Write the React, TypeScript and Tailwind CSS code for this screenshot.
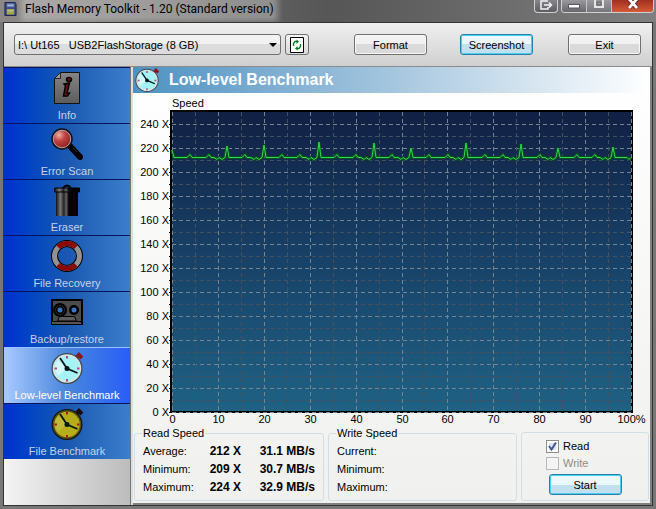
import type { ReactNode } from 'react';

const sidebarItems = [
  { name: 'Info', icon: <InfoIcon /> },
  { name: 'Error Scan', icon: <ScanIcon /> },
  { name: 'Eraser', icon: <TrashIcon /> },
  { name: 'File Recovery', icon: <LifebuoyIcon /> },
  { name: 'Backup/restore', icon: <TapeIcon /> },
  { name: 'Low-level Benchmark', icon: <StopwatchIcon face="#a5f3f4" />, active: true },
  { name: 'File Benchmark', icon: <StopwatchIcon face="#b5ae18" dark /> },
];

const readRows = [
  { label: 'Average:', factor: '212 X', rate: '31.1 MB/s' },
  { label: 'Minimum:', factor: '209 X', rate: '30.7 MB/s' },
  { label: 'Maximum:', factor: '224 X', rate: '32.9 MB/s' },
];

const writeRows = ['Current:', 'Minimum:', 'Maximum:'];

function InfoIcon() {
  return (
    <svg viewBox="0 0 32 32" className="size-8 shrink-0" aria-hidden="true">
      <defs>
        <linearGradient id="page" x1="0" y1="0" x2="0" y2="1">
          <stop offset="0" stopColor="#858585" />
          <stop offset="1" stopColor="#5c5c5c" />
        </linearGradient>
      </defs>
      <path d="M9.500 .5H28.500V31.500H3.500V6.500Z" fill="url(#page)" stroke="#111" />
      <path d="M9.500 .5V6.500H3.500Z" fill="#999" stroke="#222" />
      <ellipse cx="18" cy="7.500" rx="2.500" ry="2" fill="#701010" stroke="#000" strokeWidth="1.500" />
      <path d="M13 12L18.500 11L16 21L18.500 21L16.500 24H12.500L14.500 13.500Z" fill="#701010" stroke="#000" strokeWidth="1.500" />
    </svg>
  );
}

function ScanIcon() {
  return (
    <svg viewBox="0 0 32 32" className="size-8 shrink-0" aria-hidden="true">
      <defs>
        <radialGradient id="lens" cx=".35" cy=".3" r=".75">
          <stop offset="0" stopColor="#efb0a8" />
          <stop offset=".4" stopColor="#c04444" />
          <stop offset="1" stopColor="#861818" />
        </radialGradient>
      </defs>
      <path d="M18 17L29 29" stroke="#000" strokeWidth="6" strokeLinecap="round" />
      <circle cx="11" cy="11" r="10" fill="url(#lens)" stroke="#111" strokeWidth="1.500" />
      <circle cx="11" cy="11" r="8.700" fill="none" stroke="#a9a0a8" strokeWidth="1" />
      <path d="M22 20L26 24" stroke="#333" strokeWidth="1" />
    </svg>
  );
}

function TrashIcon() {
  return (
    <svg viewBox="0 0 32 32" className="size-8 shrink-0" aria-hidden="true">
      <defs>
        <linearGradient id="bin">
          <stop offset="0" stopColor="#111" />
          <stop offset=".2" stopColor="#777" />
          <stop offset=".36" stopColor="#222" />
          <stop offset=".46" stopColor="#666" />
          <stop offset=".58" stopColor="#050505" />
          <stop offset="1" stopColor="#000" />
        </linearGradient>
      </defs>
      <path d="M12 4Q16 -1 20 4" fill="none" stroke="#000" strokeWidth="2" />
      <path d="M5 8H27V32H5Z" fill="url(#bin)" />
      <path d="M3.500 4H28.500V8H3.500Z" fill="url(#bin)" stroke="#000" />
    </svg>
  );
}

function LifebuoyIcon() {
  return (
    <svg viewBox="0 0 32 32" className="size-8 shrink-0" aria-hidden="true">
      <circle cx="16" cy="16" r="12.500" fill="none" stroke="#000" strokeWidth="7" />
      <circle cx="16" cy="16" r="12.500" fill="none" stroke="#929292" strokeWidth="5" />
      <path d="M7.200 7.200A12.500 12.500 0 0 1 24.800 7.200M7.200 24.800A12.500 12.500 0 0 0 24.800 24.800" fill="none" stroke="#8c0909" strokeWidth="5" />
    </svg>
  );
}

function TapeIcon() {
  return (
    <svg viewBox="0 0 32 32" className="size-8 shrink-0" aria-hidden="true">
      <rect x="0" y="3" width="32" height="26" fill="#000" />
      <path d="M2 5H30V25H2Z" fill="#4b4b4b" />
      <circle cx="9" cy="14" r="7" fill="#000" />
      <circle cx="9" cy="14" r="4.500" fill="none" stroke="#2b2b2b" />
      <circle cx="9" cy="14" r="2.500" fill="#3976c4" />
      <circle cx="23" cy="14" r="5" fill="#000" />
      <circle cx="23" cy="14" r="2.500" fill="#3976c4" />
      <path d="M8.500 20.500H23.500L25.500 25H6.500Z" fill="#5c5c5c" stroke="#000" />
      <path d="M2 27H30" stroke="#555" strokeWidth="2" />
      <path d="M1.500 26V28" stroke="#1c7a1c" strokeWidth="1" />
    </svg>
  );
}

function StopwatchIcon({ face, dark, small }: { face: string; dark?: boolean; small?: boolean }) {
  const accent = dark ? '#b01818' : '#c0408a';
  return (
    <svg viewBox="0 0 32 32" className={small ? 'size-6 shrink-0' : 'size-8 shrink-0'} aria-hidden="true">
      <path d="M25 6L28 3M26.500 1.500L31 6" stroke={dark ? '#1a0c0c' : '#8c1620'} strokeWidth="4" />
      <circle cx="16" cy="16.500" r="15.500" fill={dark ? '#15150c' : '#3c4a4c'} />
      <circle cx="16" cy="16.500" r="13.500" fill={face} stroke={dark ? '#57531a' : '#dfe5e3'} strokeWidth="1.500" />
      <path d="M7 24A12 12 0 0 1 7 8L16 16Z" fill="#fff" opacity={dark ? '.15' : '.5'} />
      <path d="M16 4V6.500M16 27V29.500M3.500 16.500H6M26 16.500H28.500" stroke={accent} strokeWidth="2" />
      <path d="M9 6L16 16.500L26.500 21" fill="none" stroke="#06161a" strokeWidth="1.800" />
      <circle cx="16" cy="16.500" r="2.500" fill="#06161a" />
    </svg>
  );
}

function WinButton({ label, primary }: { label: string; primary?: boolean }) {
  return (
    <button
      type="button"
      className={
        primary
          ? 'h-[21px] w-[73px] rounded-[3px] border border-[#2c7fa6] bg-linear-to-b from-[#ecf7fb] from-50% to-[#c3e0ee] to-50% text-[11px] leading-4 text-black inset-ring-1 inset-ring-[#48d0f4]'
          : 'h-[21px] w-[73px] rounded-[3px] border border-[#707070] bg-linear-to-b from-[#f2f2f2] from-50% to-[#dadada] to-50% text-[11px] leading-4 text-black inset-ring-1 inset-ring-[#f8f8f8]'
      }
    >
      {label}
    </button>
  );
}

function TitleBar() {
  return (
    <header className="flex h-[22px] shrink-0 items-start justify-between bg-linear-to-r from-[#8c8886] via-[#565656] to-[#808080]">
      <div className="flex items-center gap-2 pl-1">
        <svg viewBox="0 0 14 16" className="h-4 w-[13px]" aria-hidden="true">
          <path d="M1 1H12L13 3V15H1Z" fill="#3c4a88" stroke="#19204a" />
          <path d="M3 2H11V6H3Z" fill="#7086b4" />
          <path d="M3 8H11V14H3Z" fill="#a3a64c" />
          <path d="M4 4H10M4 10H10" stroke="#c4c8d8" />
        </svg>
        <h1 className="bg-white/30 font-[Roboto,sans-serif] text-[12px] leading-[18px] text-black shadow-[0_0_6px_4px_rgba(255,255,255,0.3)]">
          Flash Memory Toolkit - 1.20 (Standard version)
        </h1>
      </div>
      <div className="flex gap-[3px] pr-[2px]">
        <button type="button" aria-label="Move window" className="flex h-[13px] w-6 items-start justify-center rounded-b-[4px] border border-t-0 border-[#d0d0d4] bg-linear-to-b from-[#85858b] to-[#5c5c62]">
          <svg viewBox="0 0 14 10" className="h-[10px] w-[14px]" aria-hidden="true">
            <path d="M9 1H2V9H9V7M5 5H12M10 2.500L12.500 5L10 7.500" fill="none" stroke="#f4f4f4" strokeWidth="1.500" />
          </svg>
        </button>
        <div className="flex h-[13px] overflow-hidden rounded-b-[4px] border border-t-0 border-[#d0d0d4]">
          <button type="button" aria-label="Minimize" className="flex w-[25px] items-start justify-center border-r border-[#c4c4c8] bg-linear-to-b from-[#9a9a9e] to-[#68686c]">
            <svg viewBox="0 0 12 10" className="h-[10px] w-3" aria-hidden="true"><path d="M.5 4.500H11.500V8H.5Z" fill="#fff" stroke="#555" /></svg>
          </button>
          <button type="button" aria-label="Maximize" className="flex w-[25px] items-start justify-center border-r border-[#c4c4c8] bg-linear-to-b from-[#9a9a9e] to-[#77777b]">
            <svg viewBox="0 0 12 10" className="h-[10px] w-3" aria-hidden="true"><path d="M2 -1H10V7H2Z" fill="none" stroke="#e4e4e4" strokeWidth="2" /><path d="M4 2H8V5H4Z" fill="none" stroke="#666" /></svg>
          </button>
          <button type="button" aria-label="Close" className="flex w-[41px] items-start justify-center bg-linear-to-b from-[#a03020] to-[#d85a38]">
            <svg viewBox="0 0 14 10" className="h-[10px] w-[14px]" aria-hidden="true">
              <path d="M3 -1L11 8M11 -1L3 8" stroke="#5a2a24" strokeWidth="4.500" />
              <path d="M3 -1L11 8M11 -1L3 8" stroke="#fff" strokeWidth="2.800" />
            </svg>
          </button>
        </div>
      </div>
    </header>
  );
}

function Toolbar() {
  return (
    <div className="flex h-11 shrink-0 items-center justify-between border-b border-[#8c8c8c] bg-linear-to-b from-[#f0f0f0] to-[#cfcfcf] pr-[11px] pl-[10px]">
      <div className="flex items-center gap-1">
        <div className="relative">
          <select
            aria-label="Drive"
            className="block h-[21px] w-[267px] appearance-none rounded-[3px] border border-[#707070] bg-linear-to-b from-[#f2f2f2] from-50% to-[#dcdcdc] to-50% pl-[3px] text-[11px] leading-4 text-black"
          >
            <option>{'I:\\ Ut165\u00a0\u00a0 USB2FlashStorage (8 GB)'}</option>
          </select>
          <svg viewBox="0 0 8 4" className="pointer-events-none absolute top-[9px] right-1 h-1 w-2" aria-hidden="true"><path d="M0 0H8L4 4Z" /></svg>
        </div>
        <button type="button" aria-label="Refresh" className="flex h-[21px] w-6 items-center justify-center rounded-[3px] border border-[#707070] bg-linear-to-b from-[#f2f2f2] to-[#dadada]">
          <svg viewBox="0 0 14 16" className="h-4 w-[14px]" aria-hidden="true">
            <path d="M.5 .5H13.500V15.500H.5Z" fill="#fff" stroke="#000" />
            <path d="M3.500 9V6.500L5 4.500H7M10.500 7V9.500L9 11.500H7" fill="none" stroke="#0a7a1c" strokeWidth="1.300" />
            <path d="M6.500 2.500L9 4.500L6.500 7ZM7.500 9L5 11.500L7.500 13.500Z" fill="#0a7a1c" />
          </svg>
        </button>
      </div>
      <div className="flex gap-[35px]">
        <div className="flex gap-[33px]">
          <WinButton label="Format" />
          <WinButton label="Screenshot" primary />
        </div>
        <WinButton label="Exit" />
      </div>
    </div>
  );
}

function Sidebar() {
  return (
    <nav className="flex w-[127px] shrink-0 flex-col border-r border-[#777] bg-linear-to-r from-[#f4f4f4] to-[#bcbcbc]">
      {sidebarItems.map((item) => (
        <a
          key={item.name}
          href="#"
          aria-current={item.active ? 'page' : undefined}
          className={
            item.active
              ? 'flex h-14 flex-col items-center gap-[3px] border-t border-[#9cc0ff] bg-linear-to-r from-[#a8caff] via-[#4a86dc] to-[#2b5cf8] pt-1 text-[11px] leading-4 whitespace-nowrap text-white'
              : 'flex h-14 flex-col items-center gap-[3px] border-t border-[#06145c] bg-linear-to-r from-[#002fd0] via-[#1a58b0] to-[#3c7ecc] pt-1 text-[11px] leading-4 whitespace-nowrap text-[#c6d2e8]'
          }
        >
          {item.icon}
          {item.name}
        </a>
      ))}
    </nav>
  );
}

// plot area in chart units
const LEFT = 39;
const TOP = 16;
const WIDTH = 459;
const HEIGHT = 300;
const BASE = 61.5;

const peaks = [
  [94, 50], [131, 49], [186, 46], [241, 47], [278, 52], [333, 47], [388, 48], [425, 52], [480, 51],
];
const bumps = [57, 76, 112, 149, 167, 204, 223, 259, 296, 315, 352, 370, 407, 444, 462];

function buildTrace() {
  const points: number[][] = [[LEFT, 54], [LEFT + 2, BASE]];
  const events = [
    ...peaks.map(([x, y]) => ({ x, y, peak: true })),
    ...bumps.map((x) => ({ x, y: BASE - 3, peak: false })),
  ].sort((a, b) => a.x - b.x);
  events.forEach(({ x, y, peak }) => {
    if (peak) {
      points.push([x - 13, BASE], [x - 10, BASE + 2], [x - 8, BASE], [x - 5, BASE + 2], [x - 2, BASE], [x, y], [x + 2, BASE]);
    } else {
      points.push([x - 3, BASE], [x, y], [x + 2, BASE]);
    }
  });
  points.push([494, BASE], [496, BASE + 2], [LEFT + WIDTH, BASE]);
  return points.map((p) => p.join(',')).join(' ');
}

function SpeedChart() {
  const rows = Array.from({ length: 25 }, (_, i) => i);
  const cols = Array.from({ length: 21 }, (_, i) => i);
  return (
    <svg viewBox="0 0 517 331" className="block w-full" role="img" aria-label="Speed" fontSize="11">
      <defs>
        <linearGradient id="plot" x1="0" y1="0" x2="0" y2="1">
          <stop offset="0" stopColor="#112044" />
          <stop offset=".5" stopColor="#184268" />
          <stop offset="1" stopColor="#1f6284" />
        </linearGradient>
      </defs>
      <text x="39" y="11">Speed</text>
      <rect x={LEFT - 1} y={TOP - 1} width={WIDTH + 2} height={HEIGHT + 1} fill="url(#plot)" stroke="#000" strokeWidth="2" />
      {rows.map((i) => {
        const y = TOP + HEIGHT - i * 12 + 0.5;
        return (
          <g key={i}>
            <path d={`M${LEFT} ${y}H${LEFT + WIDTH}`} stroke={i % 2 ? '#45505f' : '#76848f'} strokeDasharray="4 3" />
            <path d={`M${LEFT - 3} ${y}H${LEFT - 1}`} stroke="#000" />
            {i % 2 === 0 && <text x={LEFT - 3} y={y + 3.5} textAnchor="end">{i * 10} X</text>}
          </g>
        );
      })}
      {cols.map((i) => {
        const x = Math.round(LEFT + (i * WIDTH) / 20) + 0.5;
        return (
          <g key={i}>
            <path d={`M${x} ${TOP}V${TOP + HEIGHT}`} stroke={i % 2 ? '#45505f' : '#76848f'} strokeDasharray="4 3" />
            {i % 2 === 0 && <text x={x} y="327" textAnchor="middle">{i * 5}{i === 20 && '%'}</text>}
          </g>
        );
      })}
      <polyline points={buildTrace()} fill="none" stroke="#064f20" strokeWidth="3" />
      <polyline points={buildTrace()} fill="none" stroke="#2fdb4c" />
    </svg>
  );
}

function Group({ title, children }: { title: string; children: ReactNode }) {
  return (
    <fieldset className="h-full min-w-0 rounded-[3px] border border-[#d3dde4] px-2 text-[11px]">
      <legend className="-ml-px px-px leading-3">{title}</legend>
      <div className="pt-[3px]">{children}</div>
    </fieldset>
  );
}

function Results() {
  return (
    <div className="grid h-[74px] grid-cols-[190fr_189fr_128fr] gap-1 px-px">
      <Group title="Read Speed">
        <table className="w-full leading-[18px]">
          <tbody>
            {readRows.map((row) => (
              <tr key={row.label}>
                <th scope="row" className="text-left font-normal">{row.label}</th>
                <td className="text-right text-[12px] font-bold">{row.factor}</td>
                <td className="w-[74px] text-right text-[12px] font-bold">{row.rate}</td>
              </tr>
            ))}
          </tbody>
        </table>
      </Group>
      <Group title="Write Speed">
        <table className="w-full leading-[18px]">
          <tbody>
            {writeRows.map((label) => (
              <tr key={label}>
                <th scope="row" className="text-left font-normal">{label}</th>
                <td />
              </tr>
            ))}
          </tbody>
        </table>
      </Group>
      <div className="pt-[5px]">
        <div className="flex h-full flex-col items-center gap-[2px] rounded-[3px] border border-[#d3dde4] pt-[5px] text-[11px]">
          <div className="w-[78px]">
            <label className="flex items-center gap-1 leading-[17px]">
              <span className="relative size-[13px]">
                <input type="checkbox" defaultChecked className="peer block size-[13px] appearance-none border border-[#8c8c8c] bg-[#dde1ea] inset-ring-2 inset-ring-white" />
                <svg viewBox="0 0 13 13" className="pointer-events-none absolute inset-0 hidden peer-checked:block" aria-hidden="true">
                  <path d="M3 6L5.500 9.500L10 2.500" fill="none" stroke="#42549c" strokeWidth="2" />
                </svg>
              </span>
              Read
            </label>
            <label className="flex items-center gap-1 leading-[17px] text-[#8c8c8c]">
              <input type="checkbox" disabled className="block size-[13px] appearance-none border border-[#b8b8b8] bg-[#f4f4f4]" />
              Write
            </label>
          </div>
          <WinButton label="Start" primary />
        </div>
      </div>
    </div>
  );
}

export default function App() {
  return (
    <div className="flex min-h-screen flex-col bg-[#777] font-['Liberation_Sans',Arial,sans-serif] text-black">
      <TitleBar />
      <div className="mx-[3px] mb-[3px] flex grow flex-col border border-[#333] bg-[#ddd]">
        <Toolbar />
        <div className="flex grow">
          <Sidebar />
          <main className="ml-[2px] flex min-w-0 grow flex-col border-r-2 border-b-2 border-[#808080] bg-linear-to-b from-white to-[#f0f0ee]">
            <div className="mb-[3px] flex h-[26px] items-center gap-[10px] bg-linear-to-r from-[#4c92c2] via-[#a5c6de] to-white pl-[2px]">
              <StopwatchIcon face="#a5f3f4" small />
              <h2 className="text-[16px] leading-5 font-bold text-white">Low-level Benchmark</h2>
            </div>
            <SpeedChart />
            <Results />
          </main>
        </div>
      </div>
    </div>
  );
}
